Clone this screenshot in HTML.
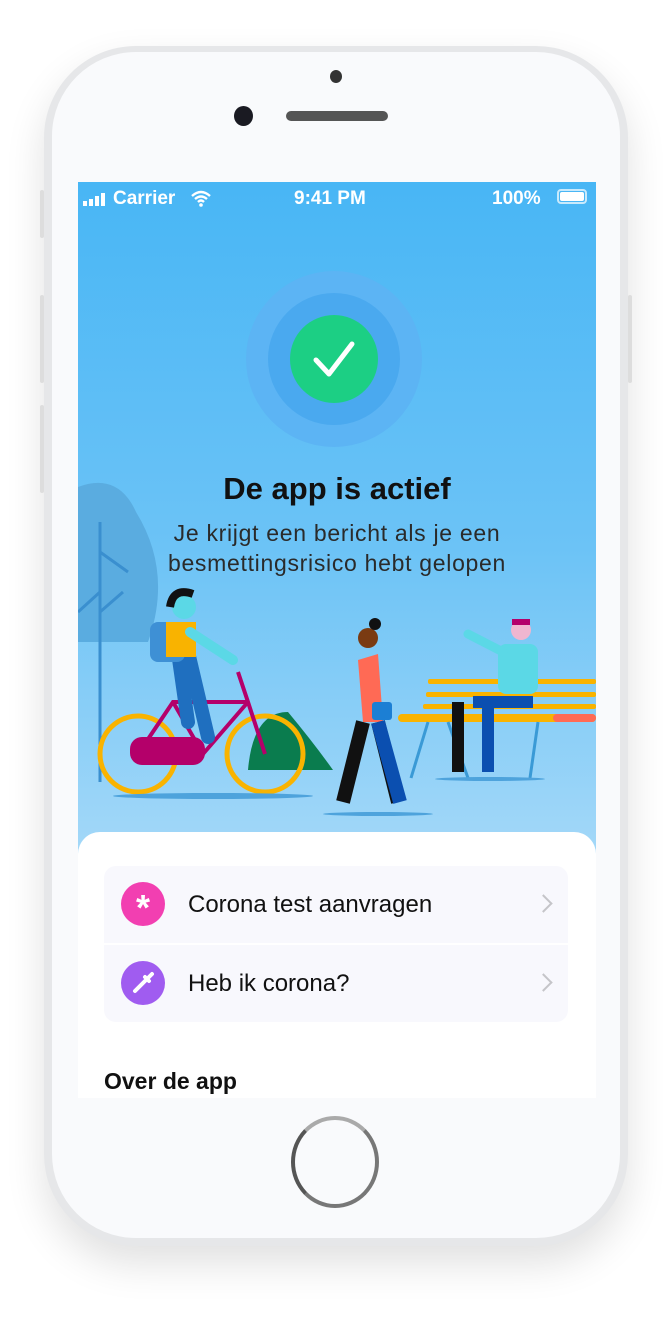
<!DOCTYPE html>
<html><head><meta charset="utf-8"><style>
html,body{margin:0;padding:0;background:#fff;}
body{width:672px;height:1318px;position:relative;overflow:hidden;font-family:"Liberation Sans",sans-serif;}
.phone{position:absolute;left:44px;top:46px;width:584px;height:1200px;border-radius:92px;background:#e6e7e9;box-shadow:0 18px 40px rgba(0,0,0,.12);}
.face{position:absolute;left:52px;top:52px;width:568px;height:1186px;border-radius:84px;background:#f9fafc;}
.screen{position:absolute;left:78px;top:182px;width:518px;height:916px;overflow:hidden;background:linear-gradient(#48b6f5 0%,#6cc3f6 40%,#a6d9f8 75%,#cfeafc 100%);}
.sb{position:absolute;top:6px;color:#fff;font-weight:bold;font-size:19px;}
.card{position:absolute;left:0;top:650px;width:518px;height:300px;background:#fff;border-radius:22px 22px 0 0;}
.list{position:absolute;left:26px;top:34px;width:464px;height:156px;background:#f8f8fd;border-radius:12px;}
.row{position:absolute;left:0;width:464px;height:77px;}
.ic{position:absolute;left:17px;top:16px;width:44px;height:44px;border-radius:50%;}
.lbl{position:absolute;left:84px;top:25px;font-size:24px;color:#111;}
.chev{position:absolute;right:18px;top:31px;width:11px;height:11px;border-right:2px solid #c5c5c9;border-top:2px solid #c5c5c9;transform:rotate(45deg);}
</style></head><body>
<div class="phone"></div>
<div style="position:absolute;left:40px;top:190px;width:4px;height:48px;background:#ddd;border-radius:2px"></div>
<div style="position:absolute;left:40px;top:295px;width:4px;height:88px;background:#ddd;border-radius:2px"></div>
<div style="position:absolute;left:40px;top:405px;width:4px;height:88px;background:#ddd;border-radius:2px"></div>
<div style="position:absolute;left:628px;top:295px;width:4px;height:88px;background:#ddd;border-radius:2px"></div>
<div class="face"></div>
<div style="position:absolute;left:330px;top:70px;width:12px;height:13px;border-radius:50%;background:#333"></div>
<div style="position:absolute;left:234px;top:106px;width:19px;height:20px;border-radius:50%;background:#1a1a22"></div>
<div style="position:absolute;left:286px;top:111px;width:102px;height:10px;border-radius:5px;background:#555"></div>
<div style="position:absolute;left:291px;top:1116px;width:88px;height:92px;border-radius:50%;border:4px solid #777;border-top-color:#aaa;border-left-color:#555;box-sizing:border-box;background:#f9fafc"></div>
<div class="screen">
 <svg style="position:absolute;left:5px;top:11px" width="24" height="13"><rect x="0" y="8" width="4" height="5" fill="#fff"/><rect x="6" y="6" width="4" height="7" fill="#fff"/><rect x="12" y="3" width="4" height="10" fill="#fff"/><rect x="18" y="0" width="4" height="13" fill="#fff"/></svg>
 <div class="sb" style="left:35px">Carrier</div>
 <svg style="position:absolute;left:112px;top:8px" width="22" height="17"><path d="M2 6 Q11 -2 20 6 M5 9 Q11 4 17 9 M8 12 Q11 9 14 12" stroke="#fff" stroke-width="2.4" fill="none"/><circle cx="11" cy="15" r="1.8" fill="#fff"/></svg>
 <div class="sb" style="left:216px">9:41 PM</div>
 <div class="sb" style="left:414px">100%</div>
 <div style="position:absolute;left:479px;top:7px;width:30px;height:15px;border:2px solid rgba(255,255,255,.7);border-radius:4px;box-sizing:border-box;padding:1px"><div style="width:100%;height:100%;background:#fff;border-radius:2px"></div></div>
 <svg style="position:absolute;left:0;top:0" width="518" height="660">
  <circle cx="256" cy="177" r="88" fill="#5cb4f4"/>
  <circle cx="256" cy="177" r="66" fill="#4aa9ef"/>
  <circle cx="256" cy="177" r="44" fill="#1ccf84"/>
  <path d="M238 178 L251 192 L274 162" stroke="#fff" stroke-width="5" fill="none" stroke-linecap="round" stroke-linejoin="round"/>
  <path d="M0 305 Q40 290 58 330 Q95 390 70 460 L0 460Z" fill="#5aace0"/>
  <path d="M22 340 V600 M22 370 L50 390 M22 410 L0 430 M22 430 L45 410" stroke="#3a8fcf" stroke-width="3" fill="none"/>
  <path d="M170 588 Q175 530 210 530 Q235 560 255 588Z" fill="#0a7c4e"/>
  <circle cx="60" cy="572" r="38" fill="none" stroke="#f9b300" stroke-width="5"/>
  <circle cx="187" cy="572" r="38" fill="none" stroke="#f9b300" stroke-width="5"/>
  <path d="M60 572 L95 520 L170 520 L187 572 M95 520 L125 572 L170 520 M160 490 L170 520" stroke="#b4006a" stroke-width="4" fill="none"/>
  <rect x="52" y="555" width="75" height="28" rx="12" fill="#b4006a"/>
  <path d="M100 470 L110 540 M110 470 L130 555" stroke="#1f6fbf" stroke-width="14" stroke-linecap="round"/>
  <rect x="72" y="440" width="35" height="40" rx="8" fill="#3e90d5"/>
  <rect x="88" y="440" width="30" height="35" fill="#f9b300"/>
  <path d="M112 450 L155 478" stroke="#5bd8e6" stroke-width="10" stroke-linecap="round"/>
  <circle cx="106" cy="425" r="12" fill="#5bd8e6"/><path d="M92 425 Q95 405 115 412" stroke="#111" stroke-width="8" fill="none"/>
  <ellipse cx="135" cy="614" rx="100" ry="3" fill="#4ea3dc"/>
  <circle cx="290" cy="456" r="10" fill="#7a3b12"/><circle cx="297" cy="442" r="6" fill="#111"/>
  <path d="M280 478 L300 472 L305 540 L285 540Z" fill="#ff6a55"/>
  <path d="M285 540 L265 620 M300 540 L320 620" stroke="#111" stroke-width="14"/>
  <path d="M300 540 L322 620" stroke="#0b4fb0" stroke-width="14"/>
  <rect x="294" y="520" width="20" height="18" rx="3" fill="#1c7fd4"/>
  <ellipse cx="300" cy="632" rx="55" ry="2" fill="#4ea3dc"/>
  <rect x="350" y="497" width="168" height="5" rx="2" fill="#f9b300"/>
  <rect x="348" y="510" width="170" height="5" rx="2" fill="#f9b300"/>
  <rect x="345" y="522" width="173" height="5" rx="2" fill="#f9b300"/>
  <rect x="320" y="532" width="198" height="8" rx="4" fill="#f9b300"/>
  <rect x="475" y="532" width="43" height="8" rx="4" fill="#ff6a55"/>
  <path d="M350 540 L333 596 M460 540 L452 596 M370 540 L390 596" stroke="#3a9ad6" stroke-width="3"/>
  <path d="M380 520 L380 590 M410 520 L410 590" stroke="#111" stroke-width="12"/>
  <path d="M395 520 L455 520 L410 520 L410 590" stroke="#0b4fb0" stroke-width="12" fill="none"/>
  <rect x="420" y="462" width="40" height="50" rx="8" fill="#5bd8e6"/>
  <path d="M425 470 L390 452" stroke="#5bd8e6" stroke-width="9" stroke-linecap="round"/>
  <circle cx="443" cy="448" r="10" fill="#f0b6d0"/><path d="M434 440 L452 440" stroke="#b4006a" stroke-width="6"/>
  <ellipse cx="412" cy="597" rx="55" ry="2" fill="#4ea3dc"/>
 </svg>
 <div style="position:absolute;left:0;width:518px;top:289px;text-align:center;font-weight:bold;font-size:31px;color:#111">De app is actief</div>
 <div style="position:absolute;left:0;width:518px;top:336px;text-align:center;font-size:23px;letter-spacing:.7px;line-height:30px;color:#2a2a2a">Je krijgt een bericht als je een<br>besmettingsrisico hebt gelopen</div>
 <div class="card">
  <div class="list">
   <div class="row" style="top:0">
    <div class="ic" style="background:#f23fb1;color:#fff;font-size:36px;text-align:center;line-height:52px;font-weight:bold">*</div>
    <div class="lbl">Corona test aanvragen</div><div class="chev"></div>
   </div>
   <div style="position:absolute;left:0;top:77px;width:464px;height:2px;background:#fff"></div>
   <div class="row" style="top:79px">
    <div class="ic" style="background:#a05cf0"><svg width="44" height="44"><path d="M14 30 L26 18 M24 16 L28 20 M27 17 L31 13" stroke="#fff" stroke-width="4" stroke-linecap="round"/></svg></div>
    <div class="lbl">Heb ik corona?</div><div class="chev"></div>
   </div>
  </div>
  <div style="position:absolute;left:26px;top:236px;font-weight:bold;font-size:23px;color:#111">Over de app</div>
 </div>
</div>
</body></html>
